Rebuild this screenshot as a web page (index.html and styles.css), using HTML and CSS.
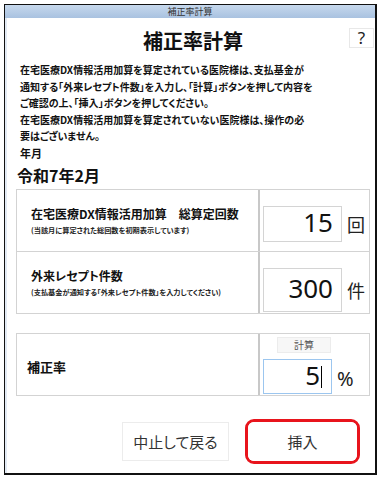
FILE: index.html
```html
<!DOCTYPE html>
<html lang="ja">
<head>
<meta charset="utf-8">
<title>補正率計算</title>
<link rel="stylesheet" href="styles.css">
</head>
<body>
<div class="window">
  <div class="titlebar">補正率計算</div>
  <div class="content">
    <div class="header">
      <h1 class="title">補正率計算</h1>
      <button class="help">?</button>
    </div>
    <p class="intro">在宅医療DX情報活用加算を算定されている医院様は、支払基金が<br>通知する「外来レセプト件数」を入力し、「計算」ボタンを押して内容を<br>ご確認の上、「挿入」ボタンを押してください。<br>在宅医療DX情報活用加算を算定されていない医院様は、操作の必<br>要はございません。</p>
    <div class="ym-label">年月</div>
    <div class="ym">令和7年2月</div>

    <div class="table">
      <div class="row">
        <div class="label-cell">
          <div class="label">在宅医療DX情報活用加算　総算定回数</div>
          <div class="note">(当該月に算定された総回数を初期表示しています)</div>
        </div>
        <div class="value-cell r1">
          <div class="field">15</div>
          <span class="unit">回</span>
        </div>
      </div>
      <div class="row">
        <div class="label-cell">
          <div class="label">外来レセプト件数</div>
          <div class="note">(支払基金が通知する「外来レセプト件数」を入力してください)</div>
        </div>
        <div class="value-cell r2">
          <div class="field tall">300</div>
          <span class="unit">件</span>
        </div>
      </div>
    </div>

    <div class="table table-rate">
      <div class="row">
        <div class="label-cell rate-label">
          <div class="label big">補正率</div>
        </div>
        <div class="value-cell calc-cell">
          <button class="calc-btn">計算</button>
          <div class="calc-line">
            <div class="field active">5<span class="caret"></span></div>
            <span class="percent">%</span>
          </div>
        </div>
      </div>
    </div>

    <div class="actions">
      <button class="btn">中止して戻る</button>
      <span class="insert-wrap"><button class="btn insert">挿入</button></span>
    </div>
  </div>
</div>
</body>
</html>
```

FILE: styles.css
```css
* {
  box-sizing: border-box;
  margin: 0;
  padding: 0;
}

body {
  margin: 0;
  background: #ffffff;
  font-family: "Noto Sans CJK JP", "Noto Sans", sans-serif;
  color: #111111;
}

.window {
  margin: 4px 0 0 4px;
  width: 373px;
  height: 471px;
  border: 2px solid #111111;
  border-top-width: 1px;
  border-left-width: 1px;
  display: flex;
  flex-direction: column;
  overflow: hidden;
}

.titlebar {
  height: 13px;
  background: linear-gradient(#c6d8ed, #a9c2e0);
  font-size: 9px;
  line-height: 13px;
  text-align: center;
  color: #333333;
}

.content {
  flex: 1;
  border-left: 2px solid #e2eaf4;
  padding: 0 5px 0 9px;
}

.header {
  display: grid;
  grid-template-columns: 1fr auto 1fr;
  align-items: start;
  margin-top: 10px;
}

.title {
  grid-column: 2;
  font-size: 20px;
  line-height: 26px;
  font-weight: 700;
  color: #111111;
}

.help {
  grid-column: 3;
  justify-self: end;
  margin-right: -4px;
  width: 25px;
  height: 20px;
  border: 1px solid #e8e8e8;
  background: #ffffff;
  font-family: "Noto Sans", sans-serif;
  font-size: 17px;
  line-height: 18px;
  color: #222222;
}

.intro {
  margin-top: 8px;
  padding-left: 4px;
  font-size: 10px;
  font-weight: 700;
  line-height: 16.5px;
  font-feature-settings: "palt" 1;
  white-space: nowrap;
}

.ym-label {
  margin-top: 2.5px;
  padding-left: 4px;
  font-size: 11px;
  font-weight: 700;
  line-height: 12px;
}

.ym {
  margin-top: 5px;
  padding-left: 1px;
  font-size: 16px;
  font-weight: 700;
  line-height: 22px;
}

.table {
  margin-top: 3px;
  width: 354px;
  border: 1px solid #d3d3d3;
}

.table-rate {
  margin-top: 19px;
}

.row {
  display: grid;
  grid-template-columns: 241px 1fr;
  height: 61px;
}

.row + .row {
  border-top: 1px solid #d3d3d3;
  height: 62px;
}

.label-cell {
  display: flex;
  flex-direction: column;
  justify-content: center;
  padding-left: 14px;
}

.label {
  font-size: 12px;
  font-weight: 700;
  line-height: 16px;
  font-feature-settings: "palt" 1;
  white-space: nowrap;
}

.note {
  margin-top: 3px;
  font-size: 7.2px;
  font-weight: 700;
  line-height: 10px;
  font-feature-settings: "palt" 1;
  white-space: nowrap;
  color: #222222;
}

.rate-label {
  padding-left: 10px;
  padding-top: 4px;
}

.label.big {
  font-size: 13px;
}

.value-cell {
  border-left: 2px solid #c8c8c8;
  display: flex;
  align-items: center;
  padding-left: 3px;
  gap: 5px;
}

.r1 {
  padding-top: 7px;
}

.r2 {
  padding-top: 14px;
}

.field {
  width: 79px;
  height: 36px;
  border: 1px solid #d4d4d4;
  background: #ffffff;
  font-family: "Noto Sans", sans-serif;
  font-size: 26px;
  line-height: 30px;
  text-align: right;
  padding-right: 8px;
  color: #111111;
}

.field.tall {
  height: 44px;
  line-height: 38px;
}

.unit {
  font-size: 18px;
  line-height: 20px;
  color: #222222;
}

.calc-cell {
  flex-direction: column;
  align-items: flex-start;
  gap: 6px;
  padding-top: 3px;
}

.calc-btn {
  margin-left: 14px;
  width: 54px;
  height: 16px;
  background: #f7f7f7;
  border: 1px solid #ececec;
  font-family: "Noto Sans CJK JP", sans-serif;
  font-size: 10px;
  line-height: 14px;
  color: #555555;
}

.calc-line {
  display: flex;
  align-items: center;
  gap: 5px;
}

.field.active {
  width: 69px;
  height: 35px;
  border-color: #9cc6ef;
  padding-right: 9px;
}

.caret {
  display: inline-block;
  width: 1px;
  height: 22px;
  margin-left: 1px;
  background: #000000;
  vertical-align: -3px;
}

.percent {
  font-family: "Noto Sans", sans-serif;
  font-size: 20px;
  line-height: 24px;
  color: #222222;
  margin-top: 4px;
}

.actions {
  display: flex;
  justify-content: flex-end;
  align-items: center;
  gap: 16px;
  margin-top: 23px;
  margin-right: 10px;
}

.btn {
  width: 107px;
  height: 39px;
  border: 1px solid #ececec;
  background: #ffffff;
  font-family: "Noto Sans CJK JP", sans-serif;
  font-size: 15px;
  color: #333333;
  font-feature-settings: "palt" 1;
}

.insert-wrap {
  display: block;
  border: 3px solid #e8141c;
  border-radius: 9px;
  overflow: hidden;
}

.btn.insert {
  width: 109px;
  border: none;
}
```
